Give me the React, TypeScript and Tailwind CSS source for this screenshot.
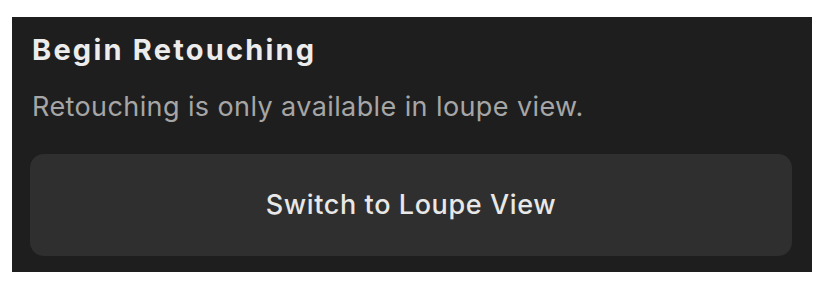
export default function App() {
  return (
    <div className="flex h-[286px] w-[828px] items-start bg-white pl-[12px] pt-[17px]">
      <div
        className="flex h-[255px] w-[800px] flex-col bg-[#1e1e1e] pl-[18px] pr-[20px] pt-[14px]"
        style={{ fontFamily: "Inter, 'Noto Sans', sans-serif" }}
      >
        <h2 className="pl-[2px] text-[29px] font-bold leading-[38px] tracking-[2.2px] text-[#ececec]">
          Begin Retouching
        </h2>
        <p className="mt-[21px] pl-[2px] text-[27px] leading-[34px] tracking-[0.4px] text-[#a6a6a6]">
          Retouching is only available in loupe view.
        </p>
        <button
          type="button"
          className="mt-[30px] flex h-[102px] w-full items-center justify-center rounded-[14px] bg-[#2f2f2f] text-[27px] font-medium tracking-[0.6px] text-[#e8e8e8]"
        >
          Switch to Loupe View
        </button>
      </div>
    </div>
  );
}
